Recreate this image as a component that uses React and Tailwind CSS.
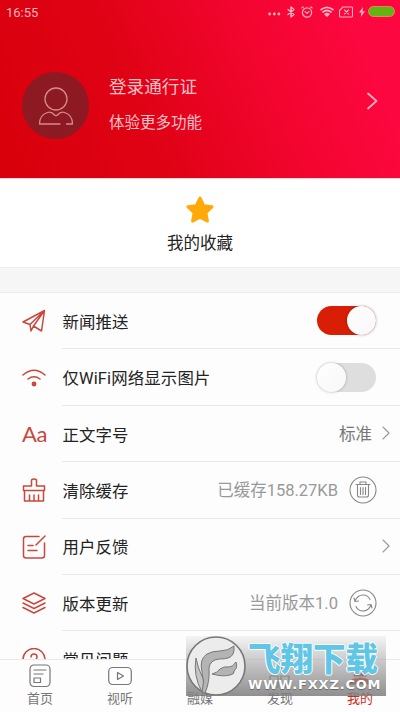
import React from 'react';
import clsx from 'clsx';

const stroke = { fill: 'none', stroke: 'currentColor', strokeLinecap: 'round', strokeLinejoin: 'round' };

function Icon({ children, className, width = 1.4, box = 24 }) {
  return (
    <svg viewBox={`0 0 ${box} ${box}`} className={className} {...stroke} strokeWidth={width}>
      {children}
    </svg>
  );
}

function StatusBar() {
  return (
    <div className="flex h-[23px] items-center pl-[6px] pr-[5px] text-[#ffb3bd]">
      <span className="pt-px font-[Roboto] text-[13px] leading-none">16:55</span>
      <div className="ml-auto flex items-center">
        <svg viewBox="0 0 13 4" className="mt-[5px] h-1 w-[13px]" fill="currentColor">
          <circle cx="1.7" cy="2" r="1.4" />
          <circle cx="6.3" cy="2" r="1.4" />
          <circle cx="10.9" cy="2" r="1.4" />
        </svg>
        <svg viewBox="0 0 8 12" className="ml-[6px] h-3 w-2" {...stroke} strokeWidth="1.4">
          <path d="M1 3.5l6 5L4 11V1l3 2.5-6 5" />
        </svg>
        <svg viewBox="0 0 12 12" className="ml-[6px] h-3 w-3" {...stroke} strokeWidth="1.2">
          <circle cx="6" cy="6.5" r="4.6" />
          <path d="M1 1.8L2.2 1M11 1.8L9.8 1M4 5.6l2 1.7 2-1.7" />
        </svg>
        <svg viewBox="0 0 14 11" className="ml-[7px] h-[11px] w-[14px]" {...stroke} strokeWidth="1.8">
          <path d="M1 3.6q6-4.6 12 0M3 6q4-3 8 0M5.2 8.2q1.8-1.3 3.6 0L7 9.8z" />
        </svg>
        <svg viewBox="0 0 14 12" className="ml-[5px] h-3 w-[14px]" {...stroke} strokeWidth="1.1">
          <path d="M4 1h8.5q1 0 1 1v8q0 1-1 1h-11q-1 0-1-1V4.5zM5.5 4l4 4M9.5 4l-4 4" />
        </svg>
        <svg viewBox="0 0 6 10" className="ml-[6px] h-[10px] w-[6px]" fill="currentColor">
          <path d="M4 0L0 5.5h2.3L1.8 10 6 4.3H3.6z" />
        </svg>
        <div className="ml-[3px] h-[11px] w-[27px] rounded-full border border-[#e08a50] bg-[#62b414]" />
      </div>
    </div>
  );
}

function Header() {
  return (
    <header className="h-[178px] shrink-0 bg-linear-[66deg,#d8000b_0%,#df0214_35%,#f30530_66%,#fd0741_90%]">
      <StatusBar />
      <div className="flex items-center px-[22px] pt-[49px]">
        <div className="flex size-[67px] items-center justify-center rounded-full bg-[#8d1922]">
          <svg viewBox="0 0 36 40" className="h-10 w-9 text-[#d48a8d]" {...stroke} strokeWidth="1.3">
            <circle cx="18" cy="13" r="11" />
            <path d="M22 38H1.5q0-9 8-11.5c3-1 5 0 7 2.5q1.5 1.3 3 0c2-2.5 4-3.5 7-2.5q8 2.5 8 11.5H28.5" />
          </svg>
        </div>
        <div className="mb-[3px] ml-5 flex flex-col text-[#ffc0c6]">
          <span className="text-[17.6px] leading-[26px]">登录通行证</span>
          <span className="mt-3 text-[15.5px] leading-[23px]">体验更多功能</span>
        </div>
        <svg viewBox="0 0 11 18" className="mb-[10px] ml-auto h-[18px] w-[11px] text-[#ffb0c0]" {...stroke} strokeWidth="1.7">
          <path d="M1 1.5L9.5 9 1 16.5" />
        </svg>
      </div>
    </header>
  );
}

function Favorites() {
  return (
    <section className="flex h-[89px] shrink-0 flex-col items-center border-t border-[#ffd5da] bg-white">
      <svg viewBox="0 0 28 28" className="mt-[17px] size-7" fill="#ffa90a" stroke="#ffa90a" strokeWidth="3" strokeLinejoin="round">
        <path d="M14 2l3.7 7.7 8.3 1.1-6.1 5.8 1.5 8.5L14 21.1l-7.4 4 1.5-8.5L2 10.8l8.3-1.1z" />
      </svg>
      <span className="mt-2 text-[16.5px] leading-6 text-[#222]">我的收藏</span>
    </section>
  );
}

function Toggle({ on }) {
  return (
    <div className={clsx('mr-px flex h-[29px] w-[59px] rounded-full', on ? 'justify-end bg-[#d91e06]' : 'justify-start bg-[#dedede]')}>
      <div className="size-[29px] rounded-full bg-linear-to-br from-white to-[#f7f7f7] shadow-[0_0_3px_rgba(0,0,0,0.3)]" />
    </div>
  );
}

function Chevron() {
  return (
    <svg viewBox="0 0 8 14" className="ml-[10px] mr-[-13px] h-[14px] w-2 text-[#999]" {...stroke} strokeWidth="1.1">
      <path d="M1 1l6 6-6 6" />
    </svg>
  );
}

const rows = [
  {
    label: '新闻推送',
    icon: <path d="M1 13L22.5 1.5 19.5 22 11.5 17 9 22 8 15.5 1 13M8 15.5L22.5 1.5 11.5 17" />,
    right: <Toggle on />,
  },
  {
    label: '仅WiFi网络显示图片',
    icon: (
      <>
        <path d="M1 9Q12-.5 23 9M6 13q6-4.5 12 0" />
        <circle cx="12" cy="18" r="1.7" fill="currentColor" />
      </>
    ),
    right: <Toggle />,
  },
  {
    label: '正文字号',
    text: 'Aa',
    right: (
      <>
        <span className="pt-1 text-[16.5px] text-[#777]">标准</span>
        <Chevron />
      </>
    ),
  },
  {
    label: '清除缓存',
    icon: <path d="M1.5 12.5V8H9.500V2.500q0-1.500 2.500-1.500t2.500 1.500V8H22.500v4.500zM2.500 12.500V23h19V12.500M7.500 17v6M12 17v6M16.500 17v6" />,
    right: (
      <>
        <span className="pt-1 text-[16.5px] text-[#999]">已缓存158.27KB</span>
        <Icon box={28} width={1.1} className="ml-[11px] size-7 text-[#888]">
          <circle cx="14" cy="14" r="13" />
          <path d="M7 8.5h14M11 8.5V6h6v2.5M8.5 8.5V19q0 2 2 2h7q2 0 2-2V8.5M11.5 11.5v7M14 11.5v7M16.5 11.5v7" />
        </Icon>
      </>
    ),
  },
  {
    label: '用户反馈',
    icon: <path d="M17 1.500H4q-2.500 0-2.500 2.500v16.500q0 2.500 2.500 2.500h16q2.500 0 2.500-2.500V8M6 10.500h5M6 15.500h9M14 10L23 1" />,
    right: <Chevron />,
  },
  {
    label: '版本更新',
    icon: <path d="M12 2L23 7.5 12 13 1 7.5zM1 12l11 5.5L23 12M1 16.5L12 22l11-5.5" />,
    right: (
      <>
        <span className="pt-1 text-[16.5px] text-[#999]">当前版本1.0</span>
        <Icon box={28} width={1.1} className="ml-[11px] size-7 text-[#888]">
          <circle cx="14" cy="14" r="13" />
          <path d="M6 12q2.5-6 8-6 5 0 7 4.5M22 16q-2.5 6-8 6-5 0-7-4.5M5 9l1 3.5 3.5-.5M23 19l-1-3.5-3.5.5" />
        </Icon>
      </>
    ),
  },
  {
    label: '常见问题',
    icon: (
      <>
        <circle cx="12" cy="11.5" r="11" />
        <path d="M9 9q0-3 3-3t3 3q0 2-3 4v2" />
      </>
    ),
  },
];

function SettingRow({ icon, text, label, right }) {
  return (
    <div className="flex h-[56.4px] shrink-0">
      <div className="flex w-[62px] items-center pl-[22px] text-[#c8483c]">
        {text ? (
          <span className="font-[Lato] text-[22px] leading-none tracking-[-0.3px]">{text}</span>
        ) : (
          <Icon className="size-6" width={1.5}>{icon}</Icon>
        )}
      </div>
      <div className="flex flex-1 items-center border-b border-[#e9e9e9] pr-[23px]">
        <span className="pl-[0.5px] pt-[5px] text-[16.4px] tracking-[0.15px] text-[#222]">{label}</span>
        <div className="ml-auto flex items-center">{right}</div>
      </div>
    </div>
  );
}

const tabs = [
  {
    label: '首页',
    icon: (
      <>
        <rect x="2" y="1" width="20" height="21.5" rx="4" />
        <path d="M6 6h12M6 10h9M6 14h6.5v4.5H6z" />
      </>
    ),
  },
  {
    label: '视听',
    icon: (
      <>
        <rect x="0.7" y="3.5" width="22.6" height="17" rx="4" />
        <path d="M9.5 8.5v7l6-3.5z" />
      </>
    ),
  },
  { label: '融媒', icon: <circle cx="12" cy="12" r="10" /> },
  {
    label: '发现',
    icon: <path d="M2 12h8v7H2zM13 12h8v7h-8zM2 19h8v4H2zM13 19h8v4h-8zM12 2.5l2.5 2.5L12 7.5 9.5 5z" />,
  },
  {
    label: '我的',
    active: true,
    icon: (
      <>
        <path d="M6 12q0-4 6-4t6 4z" fill="currentColor" />
        <path d="M1 20q2-6 11-6t11 6z" fill="currentColor" />
      </>
    ),
  },
];

function TabBar() {
  return (
    <nav className="grid h-[53px] shrink-0 grid-cols-5 border-t border-[#e9e9e9] bg-[#fdfdfd]">
      {tabs.map((tab) => (
        <div key={tab.label} className={clsx('flex flex-col items-center pt-1', tab.active ? 'text-[#cf2b20]' : 'text-[#777]')}>
          <Icon className="size-6" width={1.2}>{tab.icon}</Icon>
          <span className="mt-[2px] text-[13px] leading-[18px]">{tab.label}</span>
        </div>
      ))}
    </nav>
  );
}

function Watermark() {
  return (
    <div className="absolute bottom-4 left-[186px] flex h-[60px] w-[200px] bg-linear-to-b from-[#e8e8e8]/40 to-[#7c7c7c]/85">
      <svg viewBox="0 0 60 60" className="size-[60px] shrink-0" stroke="#777" strokeWidth="1" strokeLinejoin="round">
        <circle cx="30" cy="30" r="29" fill="#ececec" strokeWidth="1.6" />
        <path d="M10 22q-3 18 6 34 5-8-1-18-3-6-5-16z" fill="#c4c4c4" />
        <path d="M16 56q3-10 0-20-3-13 5-18 5-3 13-3 8 0 14-5 1 10-6 12-3 1-9 1-9 1-10 9 1 14-4 25z" fill="#b4b4b4" />
        <path d="M26 38q5-1 8-5 4-3 9-2 4 0 7-5 2 6-2 9 1 3-4 4-7 2-18-1z" fill="#b4b4b4" />
      </svg>
      <div className="flex flex-col pl-[2px]">
        <span className="mt-[5px] whitespace-nowrap text-[32.5px] font-black leading-[38px] text-[#5fc6e6] [text-shadow:1px_0_#fff,-1px_0_#fff,0_1px_#fff,0_-1px_#fff]">飞翔下载</span>
        <span className="mt-[-1px] whitespace-nowrap font-[DejaVu_Sans] text-[13px] font-bold leading-[14px] tracking-[0.8px] text-white [text-shadow:0_1px_1px_#666]">WWW.FXXZ.COM</span>
      </div>
    </div>
  );
}

export default function App() {
  return (
    <div className="relative flex h-[712px] w-[400px] flex-col overflow-hidden bg-[#fdfdfd] font-[Roboto,'Noto_Sans_CJK_SC',sans-serif]">
      <Header />
      <Favorites />
      <div className="h-[26px] shrink-0 border-y border-[#ececec] bg-[#f6f6f6]" />
      <main className="flex min-h-0 flex-1 flex-col overflow-hidden">
        {rows.map((row) => (
          <SettingRow key={row.label} {...row} />
        ))}
      </main>
      <TabBar />
      <Watermark />
    </div>
  );
}
